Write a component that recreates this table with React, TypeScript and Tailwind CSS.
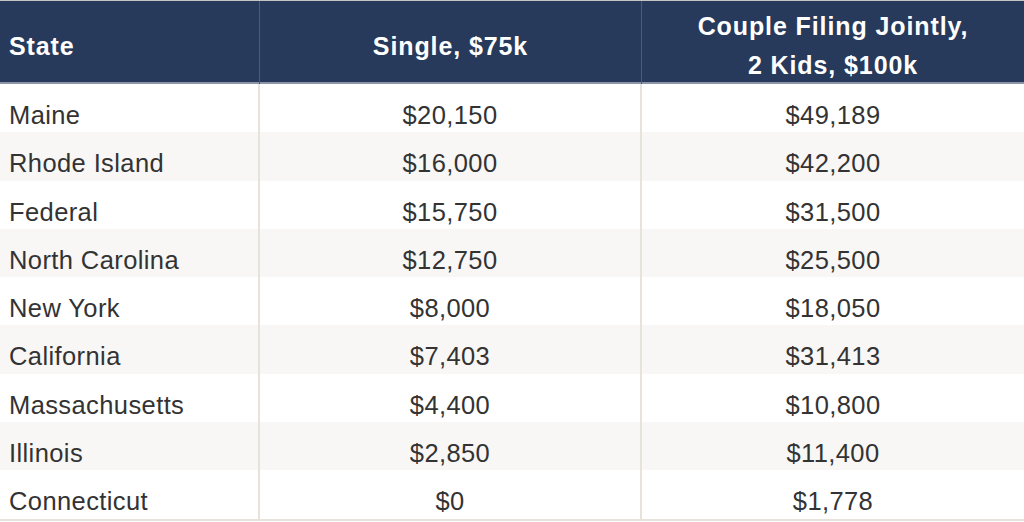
const rows: [string, string, string][] = [
  ["Maine", "$20,150", "$49,189"],
  ["Rhode Island", "$16,000", "$42,200"],
  ["Federal", "$15,750", "$31,500"],
  ["North Carolina", "$12,750", "$25,500"],
  ["New York", "$8,000", "$18,050"],
  ["California", "$7,403", "$31,413"],
  ["Massachusetts", "$4,400", "$10,800"],
  ["Illinois", "$2,850", "$11,400"],
  ["Connecticut", "$0", "$1,778"],
]

export default function App() {
  return (
    <div className="w-[1024px] h-[522px] bg-white overflow-hidden font-['Liberation_Sans',Arial,sans-serif]">
      <div className="border-t border-[#c4c4c4]">
        {/* Header */}
        <div className="grid grid-cols-[260px_382px_382px] h-[83px] bg-[#273a5b] text-white font-bold text-[25px] tracking-[0.9px] border-b-2 border-[#8d96a8]">
          <div className="flex items-center pl-[9px] pt-[8px] border-r border-[#4b5b78]">State</div>
          <div className="flex items-center justify-center pt-[8px] border-r border-[#4b5b78]">Single, $75k</div>
          <div className="flex items-center justify-center text-center pt-[6px] leading-[39px]">
            Couple Filing Jointly,
            <br />
            2 Kids, $100k
          </div>
        </div>

        {/* Body */}
        <div className="border-b-2 border-[#e7e2dc]">
          {rows.map(([state, single, couple], idx) => (
            <div
              key={state}
              className={`grid grid-cols-[260px_382px_382px] h-[48.3px] text-[25.5px] tracking-[0.4px] text-[#333333] ${
                idx % 2 === 1 ? "bg-[#f8f7f5]" : "bg-white"
              }`}
            >
              <div className="flex items-center pl-[9px] pt-[12px] border-r-2 border-[#e7e2dc]">{state}</div>
              <div className="flex items-center justify-center pt-[12px] border-r-2 border-[#e7e2dc]">{single}</div>
              <div className="flex items-center justify-center pt-[12px]">{couple}</div>
            </div>
          ))}
        </div>
      </div>
    </div>
  )
}
